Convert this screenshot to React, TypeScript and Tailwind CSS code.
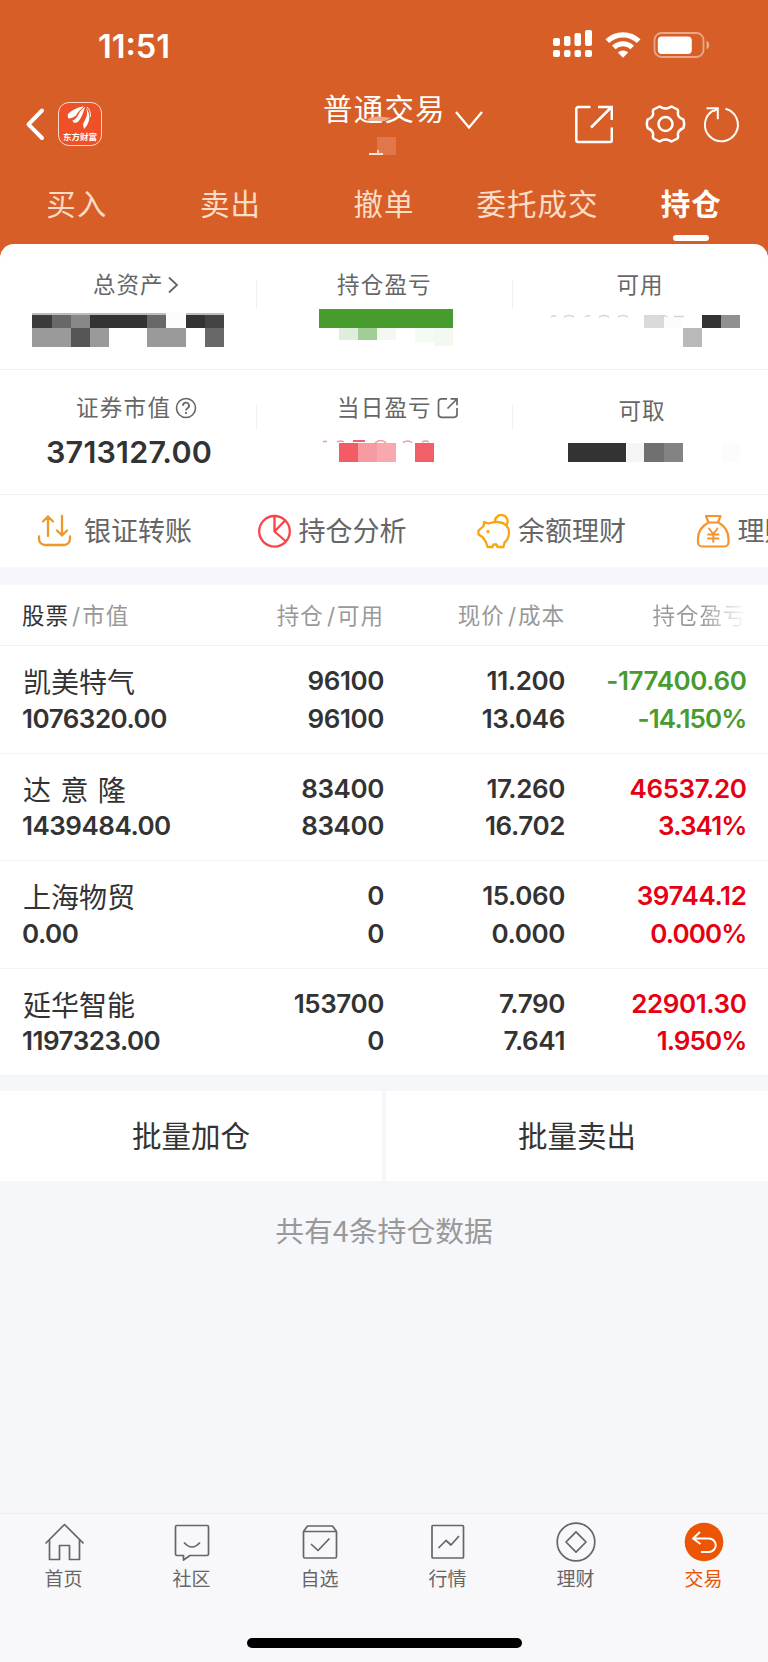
import type { ReactNode } from 'react';

type Block = [x: number, y: number, w: number, h: number, fill: string];

const tabs = ['买入', '卖出', '撤单', '委托成交', '持仓'];

const holdings = [
    { name: '凯美特气', value: '1076320.00', amount: '96100', usable: '96100', price: '11.200', cost: '13.046', profit: '-177400.60', rate: '-14.150%' },
    { name: '达 意 隆', value: '1439484.00', amount: '83400', usable: '83400', price: '17.260', cost: '16.702', profit: '46537.20', rate: '3.341%' },
    { name: '上海物贸', value: '0.00', amount: '0', usable: '0', price: '15.060', cost: '0.000', profit: '39744.12', rate: '0.000%' },
    { name: '延华智能', value: '1197323.00', amount: '153700', usable: '0', price: '7.790', cost: '7.641', profit: '22901.30', rate: '1.950%' },
];

// hidden amounts, each block is given inside a 256x40 cell
const totalBlocks: Block[] = [
    [32, 5, 192, 3, '#bdbdbd'],
    [32, 7, 20, 13, '#3b3b3b'], [52, 7, 19, 13, '#686868'], [71, 7, 19, 13, '#888888'], [90, 7, 57, 13, '#333333'],
    [147, 7, 19, 13, '#686868'], [166, 4, 20, 16, '#fcfcfc'], [186, 7, 19, 13, '#333333'], [205, 7, 19, 13, '#444444'],
    [32, 20, 39, 19, '#9a9a9a'], [71, 20, 19, 19, '#555555'], [90, 20, 19, 19, '#9a9a9a'],
    [147, 20, 39, 19, '#9a9a9a'], [205, 20, 19, 19, '#686868'],
];
const profitBlocks: Block[] = [
    [63, 1, 134, 19, '#489b2d'],
    [83, 20, 19, 12, '#dfeedb'], [102, 20, 19, 12, '#a1cd97'], [121, 20, 19, 12, '#f3f9f1'],
    [159, 20, 19, 14, '#f6faf5'], [178, 20, 19, 18, '#f3f9f1'],
];
const usableBlocks: Block[] = [
    [132, 7, 20, 13, '#dadada'], [152, 8, 19, 12, '#fcfcfc'], [190, 7, 19, 13, '#333333'], [209, 7, 19, 13, '#909090'],
    [171, 20, 19, 19, '#b9b9b9'],
];
const dayBlocks: Block[] = [
    [83, 3, 19, 19, '#f35b65'], [102, 3, 19, 19, '#f79ba2'], [121, 3, 19, 19, '#f9a9ad'], [159, 3, 19, 19, '#f35f68'],
    [97, 0, 12, 2, '#f0616a'],
];
const drawBlocks: Block[] = [
    [56, 3, 58, 19, '#333333'], [115, 3, 17, 19, '#f5f5f5'], [132, 3, 20, 19, '#707070'], [152, 3, 19, 19, '#838383'],
    [210, 3, 18, 19, '#fcfcfc'],
];

const Mosaic = ({ blocks, children }: { blocks: Block[]; children?: ReactNode }) => (
    <svg className="block h-10 w-64 shrink-0" viewBox="0 0 256 40">
        <g shapeRendering="crispEdges">
            {blocks.map(([x, y, w, h, fill], i) => (
                <rect key={i} x={x} y={y} width={w} height={h} fill={fill} />
            ))}
        </g>
        {children}
    </svg>
);

const Divider = ({ className }: { className: string }) => (
    <div className={`w-px shrink-0 bg-[#f0f1f3] -mr-px ${className}`} />
);

const StatusBar = () => (
    <div className="flex h-[88px] items-start justify-between pl-[98px] pr-[55px]">
        <span className="mt-[27px] text-[32.5px] font-semibold leading-[40px]">11:51</span>
        <svg className="mt-[28px] h-8 w-[160px]" viewBox="0 0 160 32" fill="#fff">
            <rect x="0" y="10" width="7" height="8" rx="2" />
            <rect x="11" y="8" width="6.500" height="10" rx="2" />
            <rect x="21.500" y="5" width="6.500" height="13" rx="2" />
            <rect x="32" y="2" width="7" height="16" rx="2" />
            <rect x="0" y="22" width="7" height="7" rx="2" />
            <rect x="11" y="22" width="6.500" height="7" rx="2" />
            <rect x="21.500" y="22" width="6.500" height="7" rx="2" />
            <rect x="32" y="22" width="7" height="7" rx="2" />
            <path d="M70 29.800 64.800 24.600a7.500 7.500 0 0 1 10.400 0Z" />
            <path d="M60.800 19.600a13 13 0 0 1 18.400 0" fill="none" stroke="#fff" strokeWidth="5" />
            <path d="M54.300 13.200a22.500 22.500 0 0 1 31.400 0" fill="none" stroke="#fff" strokeWidth="5.200" />
            <rect x="101.500" y="5" width="49" height="24" rx="7" fill="none" stroke="#fff" strokeOpacity=".45" strokeWidth="1.800" />
            <rect x="104.800" y="8.500" width="34" height="17.500" rx="4" />
            <path d="M153.500 13c3.600 1 3.600 7 0 8Z" fillOpacity=".5" />
        </svg>
    </div>
);

const AppLogo = () => (
    <div className="flex h-[44px] w-[44px] flex-col items-center rounded-[11px] border border-[#fbd9c9] bg-[#ee5128]">
        <svg className="mt-[2px] h-[25px] w-[30px]" viewBox="0 0 30 25" fill="#fff">
            <path d="M3 9C7 5 13 2 19 1.500 15.500 4.500 13 7 11 10.500 8.500 12.500 6 13.300 3.500 13.500 2.700 12 2.500 10.500 3 9Z" />
            <path d="M20 1.800C19 6 17.500 10 15.500 13.500 13.500 16.800 11.500 18.500 8.500 17.500L7.500 15.500C11 14.500 12.500 11.500 14 8.500 15.500 6 17.500 3.500 20 1.800Z" />
            <path d="M21 2.500c1.500 4 1.500 8-.5 11.500-1 2-2 4-2.500 5.500l1 4.500c3-3 5-6.500 5.300-11 .2-4-1.300-7.500-3.300-10.500Z" />
            <path d="M22 2c2.800 2.500 3.700 6 3.300 10" fill="none" stroke="#fff" strokeWidth=".9" />
        </svg>
        <span className="mt-[1px] whitespace-nowrap text-[8.5px] font-bold leading-[12px]">东方财富</span>
    </div>
);

const Header = () => (
    <div className="flex h-[72px] items-start">
        <div className="flex w-[288px] items-center pl-[24px] pt-[13.5px]">
            <svg className="h-[34px] w-[22px]" viewBox="0 0 22 34" fill="none" stroke="#fff" strokeWidth="4" strokeLinecap="round" strokeLinejoin="round">
                <path d="M18 3.500 4.500 17.300 18 31" />
            </svg>
            <div className="ml-[12px]"><AppLogo /></div>
        </div>
        <div className="w-[190px] pl-[35px]">
            <div className="relative h-[72px] w-[160px]">
                <p className="whitespace-nowrap text-[29.5px] leading-[42px] tracking-[1.2px]">普通交易</p>
                <svg className="absolute left-0 top-[23px] h-[50px] w-[160px]" viewBox="0 0 160 50">
                    <path d="M44 9.500 46 7q8-3 22 0l-6 3H48Z" fill="#e9a98a" />
                    <rect x="54" y="26" width="19" height="18" fill="#e0764a" />
                    <rect x="46" y="42" width="14" height="2" fill="#fbe5da" />
                    <rect x="54" y="39" width="2" height="4" fill="#f5d0bf" />
                </svg>
            </div>
        </div>
        <div className="flex items-start">
            <svg className="-ml-[25px] mt-[22px] h-5 w-[32px]" viewBox="0 0 32 20" fill="none" stroke="#fff" strokeWidth="2.300">
                <path d="M3 2 16 17.500 29 2" />
            </svg>
            <svg className="ml-[88px] mt-[16px] h-10 w-10" viewBox="0 0 40 40" fill="none" stroke="#fff" strokeWidth="2.500">
                <path d="M17.500 3H5.300a2 2 0 0 0-2 2v31a2 2 0 0 0 2 2h32a1.500 1.500 0 0 0 1.500-1.500V23.500M25 3h13.800v13M38 3.500 18 23.500" />
            </svg>
            <svg className="ml-[31px] mt-[16px] h-10 w-[42px]" viewBox="0 0 42 40" fill="none" stroke="#fff" strokeWidth="2.500" strokeLinejoin="round">
                <circle cx="21.500" cy="20" r="7" />
                <path d="M15.500 2.500Q21.500 6.500 27.500 2.500L33.500 5.500Q34.500 7 33.800 9.500 34 13.500 39.300 15.500 41 20 39.300 24 34 26.500 33.800 30.500 34.500 33 33.500 34.500L27.500 37.500Q21.500 33.500 15.500 37.500L9.500 34.500Q8.500 33 9.200 30.500 9 26.500 3.700 24 2 20 3.700 15.500 9 13.500 9.200 9.500 8.500 7 9.500 5.500Z" />
            </svg>
            <svg className="ml-[16px] mt-[17px] h-10 w-10" viewBox="0 0 40 40" fill="none" stroke="#fff" strokeWidth="2">
                <path d="M23.500 3.800a16.500 16.500 0 1 1-12 1.500M4.500 3.300h11.300v11M15.500 3.500l-4 3" />
            </svg>
        </div>
    </div>
);

const labelText = 'whitespace-nowrap text-[22.5px] leading-8 text-[#666]';

const Summary = () => (
    <div className="rounded-t-[14px] bg-white">
        <div className="flex h-[126px] border-b border-[#f1f2f4]">
            <div className="w-64 pt-[25px]">
                <div className="flex items-center pl-[93px]">
                    <span className={`${labelText} tracking-[1px]`}>总资产</span>
                    <svg className="ml-[2px] h-5 w-[14px]" viewBox="0 0 14 20" fill="none" stroke="#666" strokeWidth="1.800">
                        <path d="M3 2.500 11 10 3 17.500" />
                    </svg>
                </div>
                <div className="mt-[7px]"><Mosaic blocks={totalBlocks} /></div>
            </div>
            <Divider className="mt-[36px] h-[29px]" />
            <div className="w-64 pt-[25px]">
                <p className={`${labelText} pl-[81px] tracking-[1.2px]`}>持仓盈亏</p>
                <div className="mt-[7px]"><Mosaic blocks={profitBlocks} /></div>
            </div>
            <Divider className="mt-[36px] h-[29px]" />
            <div className="w-64 pt-[25px]">
                <p className={`${labelText} pl-[104.5px] tracking-[1px]`}>可用</p>
                <div className="mt-[7px]">
                    <Mosaic blocks={usableBlocks}>
                        <path d="M39 9q3-2 5-1M52 9q5-3 10 0M73 9q3-2 5-1M87 9q5-3 10 0M106 9q5-3 10 0M133 8h5M146 9q6-3 9 0M162 8.500h10" fill="none" stroke="#d5d5d5" strokeWidth="1.500" />
                    </Mosaic>
                </div>
            </div>
        </div>
        <div className="flex h-[125px] border-b border-[#f1f2f4]">
            <div className="w-64 pt-[22px]">
                <div className="flex items-center pl-[76px]">
                    <span className={`${labelText} tracking-[1.3px]`}>证券市值</span>
                    <svg className="ml-[4px] h-[22px] w-[22px]" viewBox="0 0 22 22" fill="none" stroke="#666" strokeWidth="1.600">
                        <circle cx="11" cy="11" r="9.500" />
                        <path d="M8 8.700a3 3 0 1 1 4.500 2.500c-1.100.7-1.500 1.200-1.500 2.300M11 15v2" strokeWidth="1.800" />
                    </svg>
                </div>
                <p className="mt-[10px] pl-[46px] text-[30.5px] font-semibold leading-9 tracking-[0.2px] text-[#333]">3713127.00</p>
            </div>
            <Divider className="mt-[35px] h-[25px]" />
            <div className="w-64 pt-[22px]">
                <div className="flex items-center pl-[81px]">
                    <span className={`${labelText} tracking-[1.2px]`}>当日盈亏</span>
                    <svg className="ml-[5px] h-[22px] w-[22px]" viewBox="0 0 22 22" fill="none" stroke="#666" strokeWidth="1.700">
                        <path d="M10 1.800H4.500a3 3 0 0 0-3 3v12.500a3 3 0 0 0 3 3H17a3 3 0 0 0 3-3V11M13.500 1.800H20v6.500M20 2 10.500 11.500" />
                    </svg>
                </div>
                <div className="mt-[16px]">
                    <Mosaic blocks={dayBlocks}>
                        <path d="M67 1.500h4M81 2q4-2 7 0M119 3q6-5 11 0M147 2.500q5-3 9 0M166 2q4-2 7 0" fill="none" stroke="#f29aa0" strokeWidth="1.500" />
                    </Mosaic>
                </div>
            </div>
            <Divider className="mt-[35px] h-[25px]" />
            <div className="w-64 pt-[25px]">
                <p className={`${labelText} pl-[106.5px] tracking-[1px]`}>可取</p>
                <div className="mt-[13px]"><Mosaic blocks={drawBlocks} /></div>
            </div>
        </div>
    </div>
);

const actions = [
    {
        label: '银证转账',
        gap: 'ml-[12px]',
        icon: (
            <g stroke="#ee982b" strokeWidth="2.300">
                <path d="M2 22.500v2.500a6 6 0 0 0 6 6h19a6 6 0 0 0 6-6v-2.500M11 22V2.500M6 7.500l5-5 5 5M25 2v19.500M20 16.500l5 5 5-5" />
            </g>
        ),
    },
    {
        label: '持仓分析',
        gap: 'ml-[7px]',
        icon: (
            <g stroke="#fb4349" strokeWidth="2.300">
                <circle cx="17.500" cy="17.300" r="15.300" />
                <path d="M17.500 2v15.500l11 9.500M17.500 17.500 28 6.500" />
            </g>
        ),
    },
    {
        label: '余额理财',
        gap: 'ml-[7px]',
        icon: (
            <g stroke="#f9a60c" strokeWidth="2.300">
                <path d="M19 7.500a6.300 6.300 0 1 1 11 4" />
                <path d="M8 8l4.500 1.500q4-1.500 8-1.500c8 0 12.500 4.500 12.500 10.500 0 4.500-2 8-4.500 10l-1 4.500h-6l-1-2.500h-3L16.500 33h-5l-1.500-5-3.500-5L2.500 20.500v-4l4-3.500q2-2 1.500-5Z" />
                <circle cx="12" cy="17.500" r=".6" fill="#f9a60c" />
            </g>
        ),
    },
    {
        label: '理财',
        gap: 'ml-[7px]',
        icon: (
            <g stroke="#f8932c" strokeWidth="2.200">
                <path d="M10 2h14.500l-2.500 6.500h-9.500L10 2ZM12.500 8.500C6 12 2 18 2 25v3.500a4 4 0 0 0 4 4h22.500a4 4 0 0 0 4-4V25c0-7-4-13-10-16.500" />
                <path d="M13 14.500l4.300 5.500 4.200-5.500M17.300 20v8M12 20.500H22.500M12 24.500H22.500" strokeWidth="1.900" />
            </g>
        ),
    },
];

const QuickActions = () => (
    <div className="flex h-[72px] items-center overflow-hidden bg-white pl-[37px] pt-[1px]">
        {actions.map((item) => (
            <div key={item.label} className="flex w-[219.5px] shrink-0 items-center">
                <svg className="h-[35px] w-[35px] shrink-0" viewBox="0 0 35 35" fill="none" strokeLinecap="round" strokeLinejoin="round">
                    {item.icon}
                </svg>
                <span className={`whitespace-nowrap pt-px text-[27px] leading-9 text-[#666] ${item.gap}`}>{item.label}</span>
            </div>
        ))}
    </div>
);

const columns = 'grid grid-cols-[221px_141px_181px_181.5px] pl-[22px]';

const Holdings = () => (
    <div className="bg-white">
        <div className={`${columns} h-[61px] items-center border-b border-[#eff0f2] pt-[2px] text-right text-[22.5px] tracking-[1px] text-[#999]`}>
            <p className="text-left"><span className="text-[#333]">股票</span><span className="pl-[3px] pr-px">/</span>市值</p>
            <p className="whitespace-nowrap">持仓<span className="pl-[3px] pr-px">/</span>可用</p>
            <p className="whitespace-nowrap">现价<span className="pl-[3px] pr-px">/</span>成本</p>
            <p className="bg-linear-to-r from-[#999] from-75% to-transparent bg-clip-text text-transparent">持仓盈亏</p>
        </div>
        {holdings.map((item) => (
            <div key={item.name} className={`${columns} h-[107.6px] border-b border-[#f3f4f5] pt-[16px] text-right text-[26px] font-semibold leading-[37.5px] tracking-[-0.4px] text-[#333]`}>
                <div className="text-left">
                    <p className="h-[37.5px] pl-px text-[28px] font-normal leading-[43px] tracking-normal [word-spacing:1.5px]">{item.name}</p>
                    <p className="tracking-[-0.5px]">{item.value}</p>
                </div>
                <div>
                    <p>{item.amount}</p>
                    <p>{item.usable}</p>
                </div>
                <div>
                    <p>{item.price}</p>
                    <p>{item.cost}</p>
                </div>
                <div className={item.profit.startsWith('-') ? 'text-[#489b2d]' : 'text-[#e60012]'}>
                    <p>{item.profit}</p>
                    <p className="tracking-[-0.9px]">{item.rate}</p>
                </div>
            </div>
        ))}
    </div>
);

const navItems = [
    { label: '首页', icon: <path d="M1.500 21.500 20.500 2.500 39.500 21.500M5.500 18v19.500h10v-14H25.500v14h10V18" /> },
    {
        label: '社区',
        icon: <path d="M5 3.500h30a1.500 1.500 0 0 1 1.500 1.500v27a1.500 1.500 0 0 1-1.500 1.500H18l-6.500 4.500v-4.500H5A1.500 1.500 0 0 1 3.500 32V5A1.500 1.500 0 0 1 5 3.500ZM12 20.500q8 9 16 0" />,
    },
    {
        label: '自选',
        icon: <path d="M3.500 9.500h33v25a1.500 1.500 0 0 1-1.500 1.500H5a1.500 1.500 0 0 1-1.500-1.500ZM3.500 9.500l4-5.500h25l4 5.500M11 22l7 6.500L29.500 16.500" />,
    },
    {
        label: '行情',
        icon: <path d="M5 3.500h29.500a1 1 0 0 1 1 1V35a1 1 0 0 1-1 1H5a1 1 0 0 1-1-1V4.500a1 1 0 0 1 1-1ZM10.500 26l7.500-7.500 5 4.500 8-9" />,
    },
    {
        label: '理财',
        icon: (
            <>
                <circle cx="20" cy="20" r="18.800" />
                <path d="M20 9.800 30 20 20 30.200 10 20Z" />
            </>
        ),
    },
    {
        label: '交易',
        active: true,
        icon: (
            <>
                <circle cx="20" cy="20" r="19.300" fill="#eb5503" stroke="none" />
                <path d="M16 10 9 16.500l7.500 5.500M9.500 16.500H25a6.700 6.700 0 0 1 0 13.500h-8" stroke="#fff" strokeWidth="1.900" />
            </>
        ),
    },
];

const BottomNav = () => (
    <div className="flex h-[149px] flex-col items-center border-t border-[#ecebf3] bg-[#f8f8fb]">
        <div className="grid w-full grid-cols-6">
            {navItems.map((item) => (
                <div key={item.label} className={`flex flex-col items-center pt-[7.5px] ${item.active ? 'text-[#eb5503]' : 'text-[#666]'}`}>
                    <svg className="h-10 w-10" viewBox="0 0 40 40" fill="none" stroke="currentColor" strokeWidth="1.700" strokeLinejoin="round">
                        {item.icon}
                    </svg>
                    <span className="mt-[4.5px] pr-px text-[19px] leading-7">{item.label}</span>
                </div>
            ))}
        </div>
        <div className="mt-[44px] h-[10px] w-[275px] rounded-full bg-black" />
    </div>
);

export default function App() {
    return (
        <div className="flex h-[1662px] w-[768px] flex-col overflow-hidden bg-[#f6f7fa] font-['Inter','Noto_Sans_CJK_SC',sans-serif]">
            <div className="bg-[#d75f27] text-white">
                <StatusBar />
                <Header />
                <div className="grid h-[84px] grid-cols-5">
                    {tabs.map((tab) => (
                        <div key={tab} className="flex flex-col items-center pt-[23px]">
                            <span className={`whitespace-nowrap text-[29.5px] leading-[42px] tracking-[1px] ${tab === '持仓' ? 'font-bold' : 'text-[#fbdcc6]'}`}>{tab}</span>
                            {tab === '持仓' && <div className="mt-[10px] h-[6px] w-[36px] rounded-full bg-white" />}
                        </div>
                    ))}
                </div>
                <Summary />
            </div>
            <QuickActions />
            <div className="h-[18px] shrink-0" />
            <Holdings />
            <div className="mt-[15px] flex h-[90px] shrink-0 gap-1 text-[29.5px] text-[#333]">
                <button className="flex-1 bg-white">批量加仓</button>
                <button className="flex-1 bg-white">批量卖出</button>
            </div>
            <p className="mt-[29px] text-center font-['Noto_Sans_CJK_SC',sans-serif] text-[28.8px] leading-10 text-[#999]">共有4条持仓数据</p>
            <div className="flex-1" />
            <BottomNav />
        </div>
    );
}
